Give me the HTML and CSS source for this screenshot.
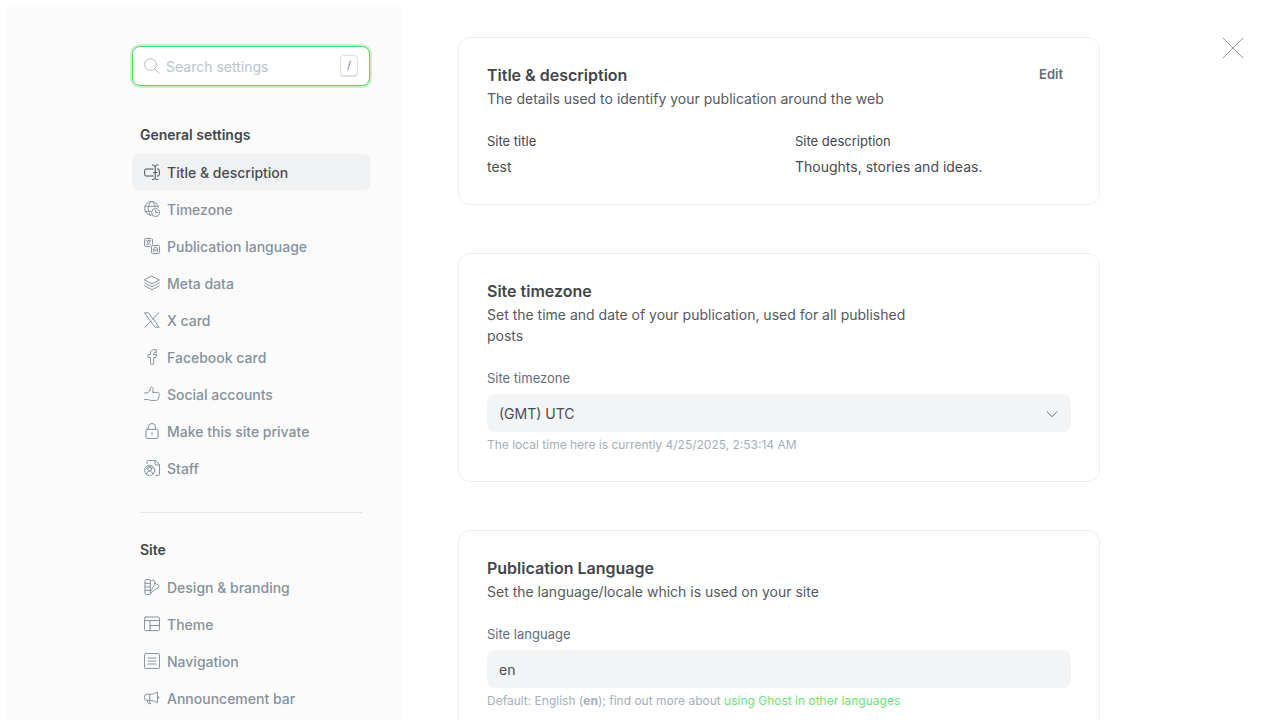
FILE: index.html
```html
<!DOCTYPE html>
<html lang="en">
<head>
<meta charset="utf-8">
<title>Settings</title>
<link rel="stylesheet" href="styles.css">
</head>
<body>
<div class="app">
  <aside class="sidebar">
    <div class="search">
      <svg class="icon" viewBox="0 0 24 24" aria-hidden="true"><circle cx="9.8" cy="9.8" r="8.8"/><path d="M16.2 16.2 23.2 23.2"/></svg>
      <input class="search-input" type="text" placeholder="Search settings" aria-label="Search settings">
      <kbd class="search-key">/</kbd>
    </div>
    <nav class="nav">
      <section class="nav-group">
        <h2 class="nav-heading">General settings</h2>
        <ul class="nav-list">
          <li><button class="nav-item is-active" type="button"><svg class="icon" viewBox="0 0 24 24" aria-hidden="true"><path d="M13.500 18H3a2 2 0 0 1-2-2V9.500a2 2 0 0 1 2-2h10.500M20 7.500h1a2 2 0 0 1 2 2V16a2 2 0 0 1-2 2h-1M16.800 4v17M12.500 1.500c2.600 0 4.300.8 4.300 2.600 0-1.800 1.700-2.600 4.200-2.600M12.500 23.500c2.600 0 4.300-.8 4.300-2.600 0 1.800 1.700 2.600 4.200 2.600M14.500 12.800H19"/></svg>Title &amp; description</button></li>
          <li><button class="nav-item is-hover" type="button"><svg class="icon" viewBox="0 0 24 24" aria-hidden="true"><path d="M10.500 21.500A10.400 10.400 0 1 1 21.700 9.500M1.500 8h19.300M1.200 15.500h9M9.500 21.400C5.200 15 5.200 7.500 10.200 1M12.800 1c2.300 2.700 3.500 5.300 3.800 8.200"/><circle cx="17.300" cy="17.300" r="6"/><path d="M17.300 13.800v3.500h3.200"/></svg>Timezone</button></li>
          <li><button class="nav-item" type="button"><svg class="icon" viewBox="0 0 24 24" aria-hidden="true"><path d="M9 12.800H2.500A1.700 1.700 0 0 1 .8 11.100V2.500A1.700 1.700 0 0 1 2.500.8h8.600a1.700 1.700 0 0 1 1.700 1.700V9"/><rect x="11.200" y="11.200" width="12" height="12" rx="1.700"/><path d="M3.500 4.300h6.600M6.800 2.800v1.500M9 4.300c-.5 2.800-2.300 4.800-5.200 5.600M4.800 6.200c1 2 2.600 3.200 4.700 3.700M14.500 20.500v-4a2.700 2.700 0 0 1 5.400 0v4M14.500 18h5.400"/></svg>Publication language</button></li>
          <li><button class="nav-item" type="button"><svg class="icon" viewBox="0 0 24 24" aria-hidden="true"><path d="M12 1.800 23 7.500 12 13.200 1 7.500ZM23 12 12 17.700 1 12M23 16.300 12 22 1 16.300"/></svg>Meta data</button></li>
          <li><button class="nav-item" type="button"><svg class="icon" viewBox="0 0 24 24" aria-hidden="true"><path d="M1.200 1.200h5.600l16 21.600h-5.600ZM22 1.200l-9 9.700M10.400 13.500 1.500 22.800"/></svg>X card</button></li>
          <li><button class="nav-item" type="button"><svg class="icon" viewBox="0 0 24 24" aria-hidden="true"><path d="M14.500 8.500V6.800c0-.9.400-1.400 1.300-1.400h2.700V1h-3.600c-3.300 0-5.100 2-5.100 5.100v2.400H6v4.400h3.800V22c0 .7.300 1 1 1h2.700c.7 0 1-.3 1-1v-9.100h3.200l1-4.400Z"/></svg>Facebook card</button></li>
          <li><button class="nav-item" type="button"><svg class="icon" viewBox="0 0 24 24" aria-hidden="true"><path d="M.8 10.500h3.400c2.300 0 5.500-3.500 5.500-7 0-2.600 4.100-2.300 4.100 1.100 0 2-.5 3.700-1 5h7.700c1.800 0 2.700 1.200 2.400 2.900l-1 5.500c-.5 2.600-2 3.700-4.500 3.700h-5.200c-4.300 0-4.200-1.400-7.200-1.400H.8"/></svg>Social accounts</button></li>
          <li><button class="nav-item" type="button"><svg class="icon" viewBox="0 0 24 24" aria-hidden="true"><rect x="3" y="9.500" width="18" height="13.800" rx="1.800"/><path d="M6.500 9.500V6.200a5.500 5.500 0 0 1 11 0v3.300M12 14.800v3"/></svg>Make this site private</button></li>
          <li><button class="nav-item" type="button"><svg class="icon" viewBox="0 0 24 24" aria-hidden="true"><path d="M4.500 5.500V2.500A1.700 1.700 0 0 1 6.200.8h11l6 6v14.700a1.700 1.700 0 0 1-1.700 1.700H18M16.500.8v5.400c0 .7.500 1.200 1.200 1.200h5.500"/><circle cx="8.500" cy="15.500" r="7.700"/><circle cx="8.500" cy="13.800" r="2.800"/><path d="M4 21c.5-2.700 2.200-4.300 4.500-4.300S12.500 18.300 13 21M4 12.500a5 5 0 0 1 9 0"/></svg>Staff</button></li>
        </ul>
      </section>
      <section class="nav-group">
        <h2 class="nav-heading">Site</h2>
        <ul class="nav-list">
          <li><button class="nav-item" type="button"><svg class="icon" viewBox="0 0 24 24" aria-hidden="true"><rect x="1.500" y=".8" width="8" height="22.400" rx="2"/><path d="M1.500 6.500h8M1.500 12h8M1.500 17h8M9.500 3c3.300-2 5.500-2 6.500.3 1 2.500-1 8-6.500 16M15.800 6l5.800 3.200c1 .7 1.200 1.700.5 2.600L9.500 21.500"/></svg>Design &amp; branding</button></li>
          <li><button class="nav-item" type="button"><svg class="icon" viewBox="0 0 24 24" aria-hidden="true"><rect x=".8" y="1.500" width="22.400" height="20.500" rx="1.700"/><path d="M.8 6.800h22.400M9 6.800V22M9 14.300h14.200"/></svg>Theme</button></li>
          <li><button class="nav-item" type="button"><svg class="icon" viewBox="0 0 24 24" aria-hidden="true"><rect x=".8" y=".8" width="22.400" height="22.400" rx="1.700"/><path d="M6 7.500h12M6 12h12M6 16.500h12"/></svg>Navigation</button></li>
          <li><button class="nav-item" type="button"><svg class="icon" viewBox="0 0 24 24" aria-hidden="true"><path d="M8.200 6.500H4.800a4.500 4.500 0 0 0 0 9h3.400ZM8.200 6.500c4.500 0 8.300-1.200 12-3.500v16c-3.700-2.300-7.500-3.500-12-3.500M20.200 9.500c3.500 0 3.500 3.500 0 3.500M4.800 15.500c0 2 .8 3.800 2.200 5h3c-1.200-1.300-1.800-3-1.800-5"/></svg>Announcement bar</button></li>
        </ul>
      </section>
    </nav>
  </aside>

  <main class="content">
    <section class="card">
      <header class="card-header">
        <div class="card-intro">
          <h1 class="card-title">Title &amp; description</h1>
          <p class="card-text">The details used to identify your publication around the web</p>
        </div>
        <button class="edit" type="button">Edit</button>
      </header>
      <dl class="details">
        <div>
          <dt class="label label-dark">Site title</dt>
          <dd class="value">test</dd>
        </div>
        <div>
          <dt class="label label-dark">Site description</dt>
          <dd class="value">Thoughts, stories and ideas.</dd>
        </div>
      </dl>
    </section>

    <section class="card">
      <header class="card-header">
        <div class="card-intro">
          <h1 class="card-title">Site timezone</h1>
          <p class="card-text">Set the time and date of your publication, used for all published posts</p>
        </div>
      </header>
      <div class="field">
        <label class="label" for="timezone">Site timezone</label>
        <div class="select">
          <select class="control" id="timezone"><option>(GMT) UTC</option></select>
          <svg class="chevron" viewBox="0 0 12 12" aria-hidden="true"><path d="M.8 3.500 6 8.700l5.200-5.200"/></svg>
        </div>
        <p class="hint">The local time here is currently 4/25/2025, 2:53:14 AM</p>
      </div>
    </section>

    <section class="card">
      <header class="card-header">
        <div class="card-intro">
          <h1 class="card-title">Publication Language</h1>
          <p class="card-text">Set the language/locale which is used on your site</p>
        </div>
      </header>
      <div class="field">
        <label class="label" for="language">Site language</label>
        <input class="control" id="language" type="text" value="en">
        <p class="hint">Default: English (<strong>en</strong>); find out more about <a class="link" href="#">using Ghost in other languages</a></p>
      </div>
    </section>
  </main>

  <div class="actions">
    <button class="close" type="button" aria-label="Close"><svg viewBox="0 0 20 20" aria-hidden="true"><path d="M0 0 20 20M20 0 0 20"/></svg></button>
  </div>
</div>
</body>
</html>
```
FILE: styles.css
```css
* {
  box-sizing: border-box;
}

body {
  margin: 0;
  background: #fff;
  color: #42464b;
  font-family: Inter, "Liberation Sans", sans-serif;
  font-size: 14px;
  line-height: 21px;
}

h1, h2, p, ul, dl, dd {
  margin: 0;
  padding: 0;
}

button, input, select {
  font: inherit;
}

button {
  border: 0;
  background: none;
  cursor: pointer;
}

svg {
  fill: none;
  stroke: currentColor;
}

.app {
  display: grid;
  grid-template-columns: 396px 1fr 180px;
  height: 100vh;
  padding: 7px 0 0 6px;
}

.sidebar {
  overflow-y: auto;
  scrollbar-width: none;
  padding: 39px 32px 0 126px;
  background: #fbfbfb;
}

.icon {
  flex: none;
  width: 16px;
  height: 16px;
  stroke-width: 1.5;
  stroke-linecap: round;
  stroke-linejoin: round;
}

.search {
  display: flex;
  align-items: center;
  gap: 6px;
  height: 40px;
  padding: 0 11px;
  border: 1px solid #4fdb62;
  border-radius: 8px;
  background: #fff;
  color: #b4bdc6;
  box-shadow: 0 0 0 2px rgba(48, 207, 67, 0.25);
}

.search-input {
  flex: 1;
  min-width: 0;
  padding: 0;
  border: 0;
  outline: 0;
  background: none;
  color: #42464b;
}

.search-input::placeholder {
  color: #bdc4cc;
  opacity: 1;
}

.search-key {
  width: 18px;
  height: 22px;
  border: 1px solid #dce0e4;
  border-bottom-width: 2px;
  border-radius: 4px;
  color: #95a1ad;
  font: 600 11px/19px Inter, sans-serif;
  text-align: center;
}

.nav-group {
  padding: 38px 0 26px;
}

.nav-group + .nav-group {
  position: relative;
  padding-top: 27px;
}

.nav-group + .nav-group::before {
  content: "";
  position: absolute;
  top: 0;
  left: 8px;
  right: 8px;
  border-top: 1px solid #dfe5ea;
}

.nav-heading {
  padding: 0 8px 9px;
  color: #42464b;
  font-size: 14px;
  font-weight: 600;
  line-height: 21px;
}

.nav-list {
  display: grid;
  gap: 1px;
  list-style: none;
}

.nav-item {
  display: flex;
  align-items: center;
  gap: 7px;
  width: 100%;
  height: 36px;
  padding: 0 12px;
  border-radius: 6px;
  color: #86919d;
  font-weight: 500;
  text-align: left;
}

.nav-item.is-active {
  background: #f0f1f3;
  color: #484c51;
}

.nav-item.is-hover {
  background: #fafafa;
}

.content {
  display: flex;
  flex-direction: column;
  gap: 48px;
  overflow-y: auto;
  scrollbar-width: none;
  padding: 30px 0 48px 56px;
}

.card {
  flex: none;
  padding: 25px 28px 27px;
  border: 1px solid #eceef0;
  border-radius: 12px;
}

.card-header {
  display: flex;
  justify-content: space-between;
  align-items: flex-start;
}

.card-intro {
  max-width: 440px;
}

.card-title {
  padding-bottom: 1px;
  color: #42464b;
  font-size: 16px;
  font-weight: 600;
  line-height: 24px;
}

.card-text {
  color: #55595e;
}

.edit {
  padding: 1px 8px;
  color: #626d79;
  font-size: 13px;
  font-weight: 600;
  line-height: 21px;
}

.details {
  display: grid;
  grid-template-columns: 1fr 1fr;
  gap: 32px;
  padding-top: 22px;
}

.label {
  display: block;
  color: #626d79;
  font-size: 13px;
  line-height: 21px;
}

.label-dark {
  color: #42464b;
}

.value {
  padding-top: 4px;
  color: #484c51;
}

.field {
  padding-top: 22px;
}

.select {
  position: relative;
}

.control {
  display: block;
  width: 100%;
  height: 38px;
  margin-top: 5px;
  padding: 0 12px;
  border: 0;
  border-radius: 8px;
  appearance: none;
  background: #f3f4f6;
  color: #484c51;
}

.chevron {
  position: absolute;
  top: 14px;
  right: 13px;
  width: 12px;
  height: 12px;
  stroke: #626d79;
  pointer-events: none;
}

.hint {
  padding-top: 4px;
  color: #a3afbb;
  font-size: 12px;
  line-height: 18px;
}

.link {
  color: #6fe07e;
  text-decoration: none;
}

.actions {
  display: flex;
  justify-content: flex-end;
  align-items: flex-start;
  padding: 31px 37px 0 0;
}

.close {
  display: flex;
  padding: 0;
  color: #8f9ba7;
}

.close svg {
  width: 20px;
  height: 20px;
}
```
